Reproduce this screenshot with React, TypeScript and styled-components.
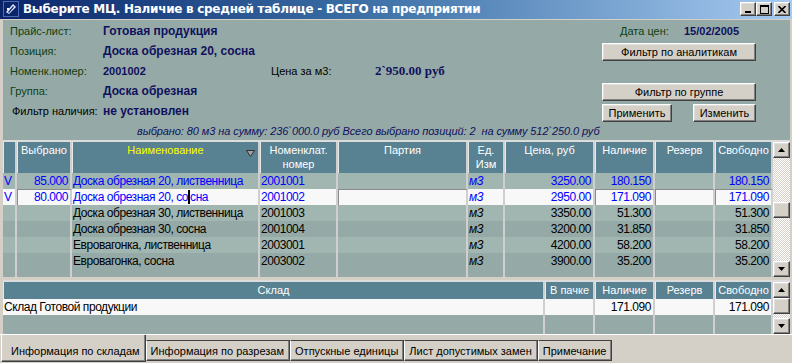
import React from "react";
import styled, { createGlobalStyle, css } from "styled-components";

const Global = createGlobalStyle`
  html, body { margin: 0; padding: 0; background: #d4d0c8; }
  body { font-family: "Liberation Sans", Arial, sans-serif; font-size: 11px; }
  * { box-sizing: border-box; }
`;

const COLS = [14, 55, 188, 78, 130, 37, 90, 60, 60, 58];
const BOTTOM_COLS = [542, 50, 60, 60, 58];

const BG = "#95aaa6";
const ROW_LIGHT = "#a1b5b1";
const HEAD = "#588191";
const SEP = "#cfcfcf";

const Window = styled.div`
  width: 792px;
  height: 363px;
  background: #d4d0c8;
  display: flex;
  flex-direction: column;
  overflow: hidden;
`;

const TitleBar = styled.div`
  height: 20px;
  flex-shrink: 0;
  display: flex;
  align-items: center;
  padding: 0 2px 1px 3px;
  background: linear-gradient(90deg, #0a246a 0%, #3a6ea5 45%, #a6caf0 100%);
  border-bottom: 1px solid #d4d0c8;
`;

const TitleText = styled.div`
  flex: 1;
  margin-left: 4px;
  color: #fff;
  font-family: "DejaVu Sans", Tahoma, sans-serif;
  font-weight: bold;
  font-size: 12px;
  letter-spacing: -0.28px;
  white-space: nowrap;
`;

const CtlGroup = styled.div`
  display: flex;
  align-items: center;
`;

const bevel = css`
  background: #d4d0c8;
  border: 1px solid;
  border-color: #ffffff #404040 #404040 #ffffff;
  box-shadow: inset -1px -1px #808080, inset 1px 1px #dfdfdf;
`;

const CtlButton = styled.div<{ $gap?: number }>`
  ${bevel};
  width: 16px;
  height: 14px;
  margin-left: ${(p) => p.$gap ?? 0}px;
  display: flex;
  align-items: center;
  justify-content: center;
`;

const Client = styled.div`
  flex-shrink: 0;
  display: flex;
  flex-direction: column;
  padding: 0 2px 0 3px;
`;

const InfoPanel = styled.div`
  height: 120px;
  background: ${BG};
  display: flex;
  flex-direction: column;
`;

const InfoTop = styled.div`
  display: flex;
  padding-top: 1px;
`;

const InfoGrid = styled.div`
  flex: 1;
  display: grid;
  grid-template-columns: 93px 168px 104px auto;
  grid-auto-rows: 20px;
  align-items: center;
  padding-left: 7px;
`;

const Label = styled.div<{ $dark?: boolean; $indent?: number }>`
  color: ${(p) => (p.$dark ? "#000" : "#0e3f12")};
  padding-left: ${(p) => p.$indent ?? 0}px;
  white-space: nowrap;
`;

const Value = styled.div<{ $serif?: boolean; $num?: boolean }>`
  color: #10105e;
  font-weight: bold;
  white-space: nowrap;
  font-family: ${(p) => (p.$serif ? '"Liberation Serif", "Times New Roman", serif' : "inherit")};
  font-size: ${(p) => (p.$serif ? "13px" : p.$num ? "11px" : "12px")};
`;

const SideCol = styled.div`
  width: 154px;
  margin-right: 34px;
  display: flex;
  flex-direction: column;
`;

const DateRow = styled.div`
  height: 20px;
  display: flex;
  align-items: center;
  padding-left: 18px;
`;

const DateLabel = styled(Label)`
  width: 64px;
`;

const Button = styled.div<{ $w?: number; $mt?: number }>`
  ${bevel};
  width: ${(p) => (p.$w ? `${p.$w}px` : "100%")};
  height: 18px;
  margin-top: ${(p) => p.$mt ?? 0}px;
  display: flex;
  align-items: center;
  justify-content: center;
  color: #000;
  white-space: nowrap;
`;

const BtnRow = styled.div`
  display: flex;
  justify-content: space-between;
  margin-top: 3px;
`;

const Summary = styled.div`
  margin-top: auto;
  height: 18px;
  display: flex;
  align-items: center;
  padding-left: 134px;
  font-style: italic;
  font-size: 11px;
  letter-spacing: -0.08px;
  color: #10105e;
  white-space: pre;
`;

const GridFrame = styled.div<{ $h: number }>`
  height: ${(p) => p.$h}px;
  flex-shrink: 0;
  display: flex;
  border-top: 2px solid #dcdcdc;
  background: ${BG};
`;

const Table = styled.div`
  width: 770px;
  display: flex;
  flex-direction: column;
`;

const HeadRow = styled.div<{ $h: number }>`
  display: flex;
  height: ${(p) => p.$h}px;
  flex-shrink: 0;
`;

const HeadCell = styled.div<{ $w: number; $yellow?: boolean }>`
  position: relative;
  width: ${(p) => p.$w}px;
  flex-shrink: 0;
  background: ${HEAD};
  color: ${(p) => (p.$yellow ? "#ffff00" : "#ffffff")};
  border-right: 2px solid ${SEP};
  border-left: 1px solid #e8e8e8;
  text-align: center;
  line-height: 14px;
  padding-top: 1px;
  white-space: nowrap;
  overflow: hidden;
`;

const SortMark = styled.svg`
  position: absolute;
  right: 3px;
  top: 8px;
`;

const Row = styled.div<{ $bg: string; $grow?: boolean }>`
  display: flex;
  height: ${(p) => (p.$grow ? "auto" : "16px")};
  flex: ${(p) => (p.$grow ? 1 : "none")};
  background: ${(p) => p.$bg};
`;

const Cell = styled.div<{ $w: number; $align?: string; $blue?: boolean; $edit?: boolean; $italic?: boolean }>`
  width: ${(p) => p.$w}px;
  flex-shrink: 0;
  border-right: 2px solid ${SEP};
  padding: 0 2px 0 1px;
  line-height: 16px;
  font-size: 12px;
  text-align: ${(p) => p.$align ?? "left"};
  color: ${(p) => (p.$blue ? "#0000ff" : "#000")};
  font-style: ${(p) => (p.$italic ? "italic" : "normal")};
  white-space: nowrap;
  overflow: hidden;
  letter-spacing: -0.45px;
  ${(p) =>
    p.$edit &&
    css`
      border-top: 1px solid #8a8a8a;
      border-left: 1px solid #8a8a8a;
      line-height: 14px;
    `}
`;

const Caret = styled.span`
  display: inline-block;
  width: 2px;
  height: 14px;
  background: #000;
  vertical-align: -3px;
`;

const ScrollBar = styled.div`
  width: 17px;
  display: flex;
  flex-direction: column;
`;

const ScrollBtn = styled.div<{ $h?: number }>`
  ${bevel};
  width: 17px;
  height: ${(p) => p.$h ?? 16}px;
  flex-shrink: 0;
  display: flex;
  align-items: center;
  justify-content: center;
`;

const Track = styled.div`
  flex: 1;
  background: repeating-conic-gradient(#ffffff 0 25%, #d4d0c8 0 50%) 0 0 / 2px 2px;
  display: flex;
  flex-direction: column;
`;

const Spacer = styled.div<{ $h: number }>`
  height: ${(p) => p.$h}px;
`;

const Gap = styled.div`
  height: 3px;
  flex-shrink: 0;
`;

const TabStrip = styled.div`
  flex: 1;
  display: flex;
  align-items: flex-start;
  border-top: 1px solid #ffffff;
  padding-left: 1px;
`;

const Tab = styled.div<{ $active?: boolean }>`
  white-space: nowrap;
  display: flex;
  align-items: center;
  color: #000;
  ${(p) =>
    p.$active
      ? css`
          height: 27px;
          padding: 5px 5px 0 9px;
          border-left: 1px solid #ffffff;
          border-right: 1px solid #404040;
          border-bottom: 1px solid #404040;
          box-shadow: inset -1px -1px #808080;
        `
      : css`
          height: 21px;
          margin-top: 5px;
          padding: 0 5px 0 4px;
          border-left: 1px solid #ffffff;
          border-top: 1px solid #404040;
          border-right: 1px solid #404040;
          border-bottom: 1px solid #404040;
          box-shadow: inset -1px -1px #808080;
        `}
`;

const Arrow = ({ up }: { up?: boolean }) => (
  <svg width="7" height="4" viewBox="0 0 7 4">
    <polygon points={up ? "3.5,0 7,4 0,4" : "0,0 7,0 3.5,4"} fill="#000" />
  </svg>
);

const Scroller = ({ thumbTop, thumbH }: { thumbTop: number; thumbH: number }) => (
  <ScrollBar>
    <ScrollBtn>
      <Arrow up />
    </ScrollBtn>
    <Track>
      <Spacer $h={thumbTop} />
      <ScrollBtn $h={thumbH} />
    </Track>
    <ScrollBtn>
      <Arrow />
    </ScrollBtn>
  </ScrollBar>
);

type R = {
  v?: string;
  sel?: string;
  name: string;
  code: string;
  price: string;
  avail: string;
  cur?: boolean;
  blue?: boolean;
};

const ROWS: R[] = [
  { v: "V", sel: "85.000", name: "Доска обрезная 20, лиственница", code: "2001001", price: "3250.00", avail: "180.150", blue: true },
  { v: "V", sel: "80.000", name: "Доска обрезная 20, сосна", code: "2001002", price: "2950.00", avail: "171.090", blue: true, cur: true },
  { name: "Доска обрезная 30, лиственница", code: "2001003", price: "3350.00", avail: "51.300" },
  { name: "Доска обрезная 30, сосна", code: "2001004", price: "3200.00", avail: "31.850" },
  { name: "Евровагонка, лиственница", code: "2003001", price: "4200.00", avail: "58.200" },
  { name: "Евровагонка, сосна", code: "2003002", price: "3900.00", avail: "35.200" },
];

const HEADERS: React.ReactNode[] = [
  "",
  "Выбрано",
  "Наименование",
  <>Номенклат.<br />номер</>,
  "Партия",
  <>Ед.<br />Изм</>,
  "Цена, руб",
  "Наличие",
  "Резерв",
  "Свободно",
];

const AppIcon = () => (
  <svg width="16" height="16" viewBox="0 0 16 16">
    <rect x="0" y="0" width="16" height="16" fill="#0a246a" />
    <rect x="0.5" y="0.5" width="15" height="15" fill="none" stroke="#8fb0ff" strokeDasharray="1 1" />
    <polygon points="3,11 10,3 13,6 6,13" fill="#dfe8ff" />
    <polygon points="5,11 10,5 11,6 6,12" fill="#1b2f8a" />
    <rect x="4" y="7" width="2" height="2" fill="#fff" />
  </svg>
);

export default function App() {
  return (
    <>
      <Global />
      <Window>
        <TitleBar>
          <AppIcon />
          <TitleText>Выберите МЦ. Наличие в средней таблице - ВСЕГО на предприятии</TitleText>
          <CtlGroup>
            <CtlButton>
              <svg width="8" height="8" viewBox="0 0 8 8"><rect x="1" y="6" width="6" height="2" fill="#000" /></svg>
            </CtlButton>
            <CtlButton>
              <svg width="9" height="9" viewBox="0 0 9 9"><rect x="0.5" y="0.5" width="8" height="8" fill="none" stroke="#000" /><rect x="0" y="0" width="9" height="2" fill="#000" /></svg>
            </CtlButton>
            <CtlButton $gap={2}>
              <svg width="8" height="7" viewBox="0 0 8 7"><path d="M0.5 0 L7.5 7 M7.5 0 L0.5 7" stroke="#000" strokeWidth="1.6" /></svg>
            </CtlButton>
          </CtlGroup>
        </TitleBar>
        <Client>
          <InfoPanel>
            <InfoTop>
              <InfoGrid>
                <Label>Прайс-лист:</Label>
                <Value>Готовая продукция</Value>
                <div />
                <div />
                <Label>Позиция:</Label>
                <Value>Доска обрезная 20, сосна</Value>
                <div />
                <div />
                <Label>Номенк.номер:</Label>
                <Value $num>2001002</Value>
                <Label $dark>Цена за м3:</Label>
                <Value $serif>2`950.00 руб</Value>
                <Label>Группа:</Label>
                <Value>Доска обрезная</Value>
                <div />
                <div />
                <Label $dark $indent={2}>Фильтр наличия:</Label>
                <Value>не установлен</Value>
              </InfoGrid>
              <SideCol>
                <DateRow>
                  <DateLabel>Дата цен:</DateLabel>
                  <Value $num>15/02/2005</Value>
                </DateRow>
                <Button $mt={2}>Фильтр по аналитикам</Button>
                <Button $mt={22}>Фильтр по группе</Button>
                <BtnRow>
                  <Button $w={70}>Применить</Button>
                  <Button $w={63}>Изменить</Button>
                </BtnRow>
              </SideCol>
            </InfoTop>
            <Summary>выбрано: 80 м3 на сумму: 236`000.0 руб Всего выбрано позиций: 2  на сумму 512`250.0 руб</Summary>
          </InfoPanel>

          <GridFrame $h={137}>
            <Table>
              <HeadRow $h={31}>
                {HEADERS.map((h, i) => (
                  <HeadCell key={i} $w={COLS[i]} $yellow={i === 2}>
                    {h}
                    {i === 2 && (
                      <SortMark width="9" height="7" viewBox="0 0 9 7">
                        <polygon points="0.5,0.5 8.5,0.5 4.5,6.5" fill="#a0a0a0" stroke="#303030" strokeWidth="1" />
                      </SortMark>
                    )}
                  </HeadCell>
                ))}
              </HeadRow>
              {ROWS.map((r, i) => {
                const bg = r.cur ? "#f8f8f8" : i % 2 === 0 ? ROW_LIGHT : BG;
                const e = !!r.cur;
                return (
                  <Row key={i} $bg={bg}>
                    <Cell $w={COLS[0]} $blue>{r.v}</Cell>
                    <Cell $w={COLS[1]} $align="right" $blue $edit={e}>{r.sel}</Cell>
                    <Cell $w={COLS[2]} $blue={r.blue}>
                      {r.cur ? (
                        <>Доска обрезная 20, со<Caret />сна</>
                      ) : (
                        r.name
                      )}
                    </Cell>
                    <Cell $w={COLS[3]} $blue={r.blue}>{r.code}</Cell>
                    <Cell $w={COLS[4]} $edit={e} />
                    <Cell $w={COLS[5]} $blue={r.blue} $italic>м3</Cell>
                    <Cell $w={COLS[6]} $align="right" $blue={r.blue}>{r.price}</Cell>
                    <Cell $w={COLS[7]} $align="right" $blue={r.blue} $edit={e}>{r.avail}</Cell>
                    <Cell $w={COLS[8]} $edit={e} />
                    <Cell $w={COLS[9]} $align="right" $blue={r.blue} $edit={e}>{r.avail}</Cell>
                  </Row>
                );
              })}
              <Row $bg={BG} $grow>
                {COLS.map((w, i) => (
                  <Cell key={i} $w={w} />
                ))}
              </Row>
            </Table>
            <Scroller thumbTop={44} thumbH={16} />
          </GridFrame>

          <Gap />

          <GridFrame $h={54}>
            <Table>
              <HeadRow $h={17}>
                {["Склад", "В пачке", "Наличие", "Резерв", "Свободно"].map((h, i) => (
                  <HeadCell key={i} $w={BOTTOM_COLS[i]}>{h}</HeadCell>
                ))}
              </HeadRow>
              <Row $bg="#f8f8f8">
                <Cell $w={BOTTOM_COLS[0]}>Склад Готовой продукции</Cell>
                <Cell $w={BOTTOM_COLS[1]} />
                <Cell $w={BOTTOM_COLS[2]} $align="right">171.090</Cell>
                <Cell $w={BOTTOM_COLS[3]} />
                <Cell $w={BOTTOM_COLS[4]} $align="right">171.090</Cell>
              </Row>
              <Row $bg={BG} $grow>
                {BOTTOM_COLS.map((w, i) => (
                  <Cell key={i} $w={w} />
                ))}
              </Row>
            </Table>
            <Scroller thumbTop={0} thumbH={16} />
          </GridFrame>
        </Client>
        <TabStrip>
          <Tab $active>Информация по складам</Tab>
          <Tab>Информация по разрезам</Tab>
          <Tab>Отпускные единицы</Tab>
          <Tab>Лист допустимых замен</Tab>
          <Tab>Примечание</Tab>
        </TabStrip>
      </Window>
    </>
  );
}
